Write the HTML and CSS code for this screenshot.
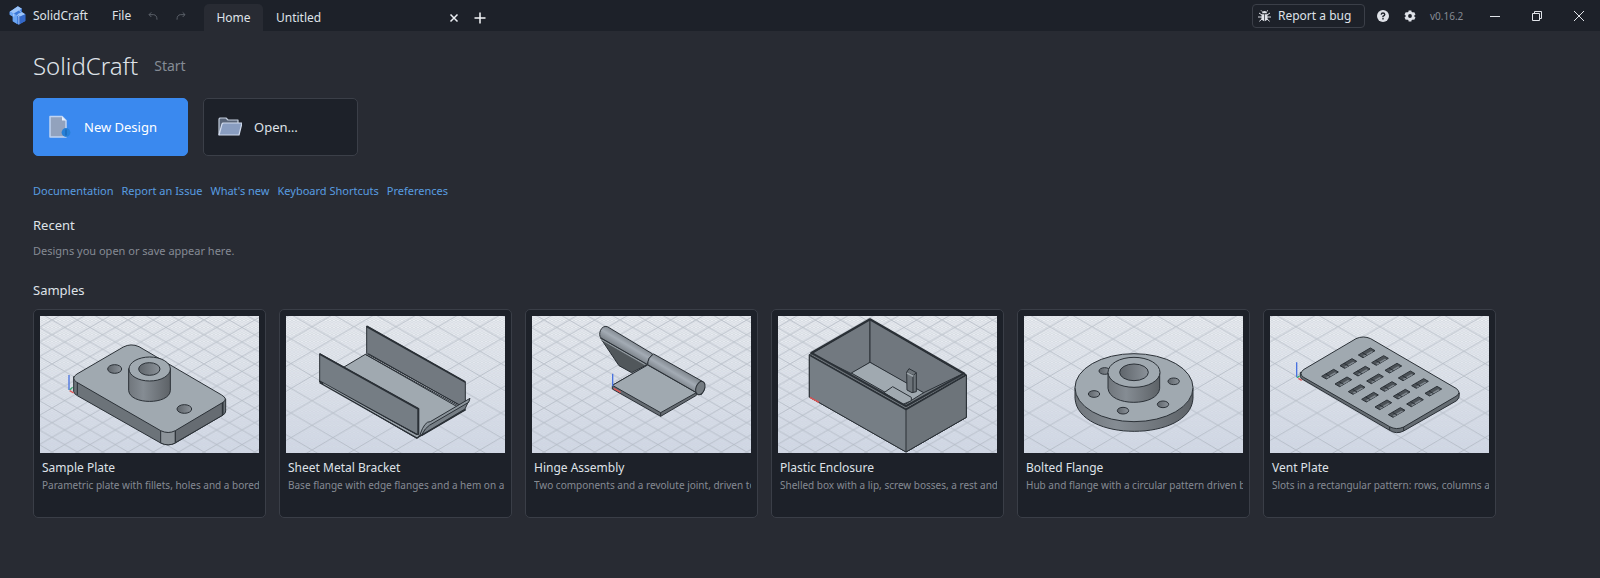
FILE: index.html
```html
<!DOCTYPE html>
<html lang="en">
<head>
<meta charset="utf-8">
<title>SolidCraft</title>
<link rel="stylesheet" href="styles.css">
</head>
<body>
<svg class="defs" aria-hidden="true">
  <defs>
    <linearGradient id="sky" x1="0" y1="0" x2="0" y2="1"><stop offset="0" stop-color="#eceff3"/><stop offset="1" stop-color="#d1d8e5"/></linearGradient>
    <linearGradient id="tube" x1="0" y1="0" x2="1" y2="0"><stop offset="0" stop-color="#70767c"/><stop offset=".35" stop-color="#858c93"/><stop offset="1" stop-color="#5d6267"/></linearGradient>
    <linearGradient id="bore" x1="0" y1="0" x2="1" y2="0"><stop offset="0" stop-color="#5f656b"/><stop offset="1" stop-color="#8b9299"/></linearGradient>
    <linearGradient id="barrel" gradientUnits="userSpaceOnUse" x1="430" y1="235" x2="408" y2="272"><stop offset="0" stop-color="#7c838a"/><stop offset=".5" stop-color="#a3abb4"/><stop offset="1" stop-color="#7b8289"/></linearGradient>
    <pattern id="minor" width="12" height="7" patternUnits="userSpaceOnUse"><path d="M0 0L12 7M12 0L0 7" stroke="#b4bcc8" stroke-width=".9"/></pattern>
    <pattern id="wide" x="12" y="451" width="126" height="74" patternUnits="userSpaceOnUse"><path d="M0 0L126 74M126 0L0 74" stroke="#a9b1bb" stroke-width="2"/></pattern>
    <pattern id="fine" x="20" y="443" width="76" height="44" patternUnits="userSpaceOnUse"><path d="M0 0L76 44M76 0L0 44" stroke="#a9b1bb" stroke-width="2"/></pattern>
    <linearGradient id="fade" x1="0" y1="0" x2="0" y2="1"><stop offset="0" stop-color="#fff"/><stop offset="1" stop-color="#fff" stop-opacity=".25"/></linearGradient>
    <mask id="depth" maskUnits="userSpaceOnUse" x="60" y="123" width="657" height="412"><rect x="60" y="123" width="657" height="412" fill="url(#fade)"/></mask>
    <g id="floor-wide"><rect x="60" y="123" width="657" height="412" fill="url(#sky)"/><rect x="60" y="123" width="657" height="412" fill="url(#minor)" mask="url(#depth)"/><rect x="60" y="123" width="657" height="412" fill="url(#wide)"/></g>
    <g id="floor-fine"><rect x="60" y="123" width="657" height="412" fill="url(#sky)"/><rect x="60" y="123" width="657" height="412" fill="url(#minor)" mask="url(#depth)"/><rect x="60" y="123" width="657" height="412" fill="url(#fine)"/></g>
    <g id="slot"><path d="M-25 6L11 -15L25 -7L-11 14Z" fill="#4c5257"/><path d="M-12 9L14 -6L20 -4L-8 12Z" fill="#7f878e" stroke="none"/><path d="M-13 -1L1 7" /></g>
  </defs>
</svg>

<header class="titlebar">
  <div class="brand">
    <svg class="logo" viewBox="0 0 50 56" aria-hidden="true"><path d="M2 17L26 1L38 8L38 19L48 24V44L28 55L11 45V31L2 26Z" fill="#3b78d8"/><path d="M2 17L26 1L38 8L14 22ZM24 24L38 18L48 24L32 32Z" fill="#9cc4f8"/><path d="M2 17L14 22L24 27V53L11 45V31L2 26Z" fill="#6ba5f2"/><path d="M28 33L48 24V44L28 55Z" fill="#3468c8"/><path d="M14 22V31M24 27L29 32V54M31 12L34 18" fill="none" stroke="#d3e5ff" stroke-width="2"/></svg>
    <span>SolidCraft</span>
  </div>
  <button class="menu" type="button">File</button>
  <button class="history" type="button" aria-label="Undo"><svg viewBox="0 0 30 30"><path d="M10 4L3 11L10 18M3 11H17Q27 12 27 26"/></svg></button>
  <button class="history" type="button" aria-label="Redo"><svg viewBox="0 0 30 30"><path d="M20 4L27 11L20 18M27 11H13Q3 12 3 26"/></svg></button>
  <nav class="tabs" aria-label="Documents">
    <button class="tab active" type="button">Home</button>
    <div class="tab document">
      <button class="plain" type="button">Untitled</button>
      <button class="close-tab" type="button" aria-label="Close tab"><svg viewBox="0 0 10 10"><path d="M1.500 1.500L8.500 8.500M8.500 1.500L1.500 8.500"/></svg></button>
    </div>
    <button class="add-tab" type="button" aria-label="New tab"><svg viewBox="0 0 12 12"><path d="M6 .5V11.500M.5 6H11.500"/></svg></button>
  </nav>
  <div class="actions">
    <button class="bug" type="button"><svg viewBox="0 0 39 36" aria-hidden="true"><path d="M12 10Q12 3 19.500 3T27 10Z"/><path d="M11 13H18.500V34Q11 33 10 25ZM20.500 13H28L29 25Q28 33 20.500 34Z"/><path d="M13 5L9 1M26 5L30 1M12 15L3 9M11 21H0M12 27L4 34M27 15L36 9M28 21H39M27 27L35 34" fill="none" stroke="currentColor" stroke-width="3"/></svg>Report a bug</button>
    <button class="round help" type="button" aria-label="Help"><svg viewBox="0 0 12 12"><circle cx="6" cy="6" r="6" fill="currentColor"/><path d="M4.200 4.700Q4.400 3 6 3T7.800 4.600Q7.800 5.500 6 6.300V7.200M6 8V9.400" fill="none" stroke="#1d2129" stroke-width="1.400"/></svg></button>
    <button class="round" type="button" aria-label="Settings"><svg viewBox="0 0 12 12"><circle cx="6" cy="6" r="3.200" fill="none" stroke="currentColor" stroke-width="2.600"/><path d="M6 .5V2.500M6 9.500V11.500M1.200 3.200L3 4.300M9 7.700L10.800 8.800M1.200 8.800L3 7.700M9 4.300L10.800 3.200" stroke="currentColor" stroke-width="2.800"/></svg></button>
    <span class="version">v0.16.2</span>
    <button class="window" type="button" aria-label="Minimize"><svg viewBox="0 0 12 12"><path d="M1 6.500H11"/></svg></button>
    <button class="window" type="button" aria-label="Restore"><svg viewBox="0 0 12 12"><path d="M1.500 3.500H8.500V10.500H1.500ZM3.500 3V1.500H10.500V8.500H9"/></svg></button>
    <button class="window" type="button" aria-label="Close"><svg viewBox="0 0 12 12"><path d="M1 1L11 11M11 1L1 11"/></svg></button>
  </div>
</header>

<main>
  <div class="heading"><h1>SolidCraft</h1><span>Start</span></div>
  <div class="starters">
    <button class="starter primary" type="button"><svg viewBox="0 0 24 24" aria-hidden="true"><path d="M2 1.500H14L18 5.500V22H2Z" fill="#92a2bd" stroke="#c0d4f2" stroke-width="1.500" stroke-linejoin="round"/><path d="M14 1.500V5.500H18" fill="#e8f1ff"/><circle cx="18" cy="17.500" r="4.400" fill="#2680d8"/><path d="M18 14.500V20.500" stroke="#175ca5"/></svg>New Design</button>
    <button class="starter" type="button"><svg viewBox="0 0 24 24" aria-hidden="true"><path d="M1 20V4L2 3H8L10 5H20V9H5L1 20" fill="#596579" stroke="#c3cddd" stroke-width="1.200" stroke-linejoin="round"/><path d="M4 9L5 8H24L21 20H1Z" fill="#899dc0" stroke="#d0daec" stroke-width="1.200" stroke-linejoin="round"/></svg>Open…</button>
  </div>
  <nav class="links" aria-label="Resources">
    <a href="#documentation">Documentation</a><a href="#issue">Report an Issue</a><a href="#news">What's new</a><a href="#shortcuts">Keyboard Shortcuts</a><a href="#preferences">Preferences</a>
  </nav>
  <section class="recent"><h2>Recent</h2><p>Designs you open or save appear here.</p></section>
  <section class="samples">
    <h2>Samples</h2>
    <div class="cards">
      <a class="card" href="#sample-plate">
        <svg viewBox="60 123 657 412" role="img" aria-label="Plate model"><use href="#floor-fine"/>
          <g class="model"><path d="M161 305V350Q162 356 172 362L422 504Q445 515 466 504L609 420Q617 416 617 408V372Z" fill="#6c7379"/><path d="M422 466V504Q445 515 466 504V466Z" fill="#8d949a"/><path d="M466 466V503L609 420V378Z" fill="#666c72"/><path d="M310 216Q333 204 357 215L605 360Q625 372 609 382L466 467Q445 478 422 467L169 321Q152 309 171 297Z" fill="#a0a9b0"/><path d="M172 323V360M607 384V420"/><ellipse cx="284" cy="282" rx="21" ry="13" fill="url(#bore)"/><ellipse cx="493" cy="402" rx="22" ry="13" fill="url(#bore)"/><path d="M326 281V347C330 390 448 390 451 347V281Z" fill="url(#tube)"/><ellipse cx="389" cy="282" rx="62" ry="36" fill="#a0a9b0"/><ellipse cx="388" cy="282" rx="32" ry="19" fill="url(#bore)"/></g>
          <g class="axes"><path class="z" d="M147 300V345"/><path class="y" d="M149 345L158 337"/><path class="x" d="M149 347L161 354"/></g></svg>
        <strong>Sample Plate</strong><span>Parametric plate with fillets, holes and a bored</span></a>
      <a class="card" href="#sheet-metal-bracket">
        <svg viewBox="60 123 657 412" role="img" aria-label="Bracket model"><use href="#floor-wide"/>
          <g class="model"><path d="M160 320L298 238L598 404L452 490Z" fill="#a0a9b0"/><path d="M302 153L598 321V390L578 388L302 236Z" fill="#727980"/><path d="M302 154L598 321" stroke-width="6"/><path d="M298 238L575 396M307 236L590 396"/><path d="M462 481Q477 450 492 443L610 374L597 402L460 484Z" fill="#767e85"/><path d="M462 479Q476 438 493 440L612 370L608 382L490 451Q478 458 466 481Z" fill="#8c959c"/><path d="M466 482L599 404" stroke-width="4"/><path d="M161 236L457 401V480L161 321Z" fill="#757d84"/><path d="M161 237L457 402V478" stroke-width="6"/><path d="M161 318L453 479M161 323L453 489L464 481" stroke-width="4"/><path d="M172 326L450 482" stroke="#99a1a8"/></g></svg>
        <strong>Sheet Metal Bracket</strong><span>Base flange with edge flanges and a hem on a 2 mm</span></a>
      <a class="card" href="#hinge-assembly">
        <svg viewBox="60 123 657 412" role="img" aria-label="Hinge model"><use href="#floor-fine"/>
          <g class="model"><path d="M266 190L321 272L359 293L407 268L405 260Z" fill="#51575b"/><path d="M268 193L400 269" stroke="#91999f" stroke-width="4"/><path d="M270 190L403 265" stroke-width="4"/><path d="M301 331L407 270L553 353V361L446 424L301 342Z" fill="#656b71"/><path d="M301 331L407 270L553 353L446 413Z" fill="#a0a9b0"/><path d="M446 413V424"/><path d="M286 155L422 237Q406 250 407 269L267 189C257 179 267 149 286 155Z" fill="url(#barrel)"/><path d="M425 237L571 319Q586 336 568 359L552 352L407 269Q407 248 425 237Z" fill="url(#barrel)"/><ellipse cx="565" cy="339" rx="13" ry="21" transform="rotate(20 565 339)" fill="#747b81"/></g>
          <g class="axes"><path class="z" d="M302 296V334"/><path class="x" d="M305 340L326 352"/></g></svg>
        <strong>Hinge Assembly</strong><span>Two components and a revolute joint, driven to</span></a>
      <a class="card" href="#plastic-enclosure">
        <svg viewBox="60 123 657 412" role="img" aria-label="Enclosure model"><use href="#floor-fine"/>
          <g class="model"><path d="M154 239L336 133L625 300V427L444 531L154 366Z" fill="#747b81"/><path d="M336 133V262L280 296L160 236Z" fill="#727980"/><path d="M336 133L615 296L495 354L336 262Z" fill="#70777e"/><path d="M336 262L497 353L443 387L280 294Z" fill="#a0a9b0"/><path d="M378 353L404 335L460 367V377L435 388Z" fill="#a0a9b0"/><path d="M446 292L453 281L475 293V350L462 353L447 345Z" fill="#6c7379"/><path d="M446 292L466 301L475 293M465 302V352"/><path d="M447 294L466 304" stroke="#9ca4aa" stroke-width="5"/><path d="M154 239L444 402L625 300V427L444 531L154 366Z" fill="#767e85"/><path d="M444 402L625 300V427L444 531Z" fill="#6d747a"/><path d="M160 234L336 133L619 296L444 394Z" fill="none" stroke-width="7"/><path d="M157 242L444 404L621 302" fill="none" stroke-width="4"/><path d="M163 239L444 398L618 299" fill="none" stroke="#858c92" stroke-width="1"/></g>
          <g class="axes"><path class="x" d="M156 367L183 382"/></g></svg>
        <strong>Plastic Enclosure</strong><span>Shelled box with a lip, screw bosses, a rest and</span></a>
      <a class="card" href="#bolted-flange">
        <svg viewBox="60 123 657 412" role="img" aria-label="Flange model"><use href="#floor-wide"/>
          <g class="model"><path d="M213 338V370C222 502 560 502 567 370V338Z" fill="url(#tube)"/><ellipse cx="390" cy="338" rx="177" ry="102" fill="#a0a9b0"/><g fill="url(#bore)"><ellipse cx="302" cy="288" rx="17" ry="10"/><ellipse cx="270" cy="357" rx="17" ry="10"/><ellipse cx="357" cy="407" rx="17" ry="10"/><ellipse cx="477" cy="388" rx="17" ry="10"/><ellipse cx="509" cy="319" rx="17" ry="10"/></g><path d="M312 292V340C317 396 462 396 467 340V292Z" fill="url(#tube)"/><ellipse cx="390" cy="292" rx="78" ry="45" fill="#a0a9b0"/><ellipse cx="390" cy="292" rx="43" ry="25" fill="url(#bore)"/></g></svg>
        <strong>Bolted Flange</strong><span>Hub and flange with a circular pattern driven by</span></a>
      <a class="card" href="#vent-plate">
        <svg viewBox="60 123 657 412" role="img" aria-label="Vent plate model"><use href="#floor-wide"/>
          <g class="model"><path d="M151 292V304Q151 311 161 315L419 466Q439 479 461 468L620 377Q629 371 628 354Z" fill="#656c72"/><path d="M318 191Q340 181 362 191L618 340Q636 353 618 364L461 456Q439 466 419 455L161 307Q144 296 162 283Z" fill="#a0a9b0"/><path d="M419 456V466M461 456V468"/>
            <use href="#slot" x="240" y="298"/><use href="#slot" x="280" y="321"/><use href="#slot" x="320" y="344"/><use href="#slot" x="360" y="367"/><use href="#slot" x="400" y="390"/><use href="#slot" x="440" y="413"/>
            <use href="#slot" x="295" y="266"/><use href="#slot" x="335" y="289"/><use href="#slot" x="375" y="312"/><use href="#slot" x="415" y="335"/><use href="#slot" x="455" y="358"/><use href="#slot" x="495" y="381"/>
            <use href="#slot" x="350" y="234"/><use href="#slot" x="390" y="257"/><use href="#slot" x="430" y="280"/><use href="#slot" x="470" y="303"/><use href="#slot" x="510" y="326"/><use href="#slot" x="550" y="349"/></g>
          <g class="axes"><path class="z" d="M140 262V307"/><path class="y" d="M141 308L149 302"/><path class="x" d="M145 310L155 316"/></g></svg>
        <strong>Vent Plate</strong><span>Slots in a rectangular pattern: rows, columns and</span></a>
    </div>
  </section>
</main>
</body>
</html>
```
FILE: styles.css
```css
* { box-sizing: border-box; }
body { margin: 0; min-height: 100vh; background: #282b33; color: #dfe2e8; font: 12px/18px "Noto Sans", "Open Sans", sans-serif; }
button { margin: 0; padding: 0; border: 0; background: none; color: inherit; font: inherit; }
svg { display: block; }
h1, h2, p { margin: 0; font-weight: 400; }
.defs { position: absolute; width: 0; height: 0; }

.titlebar { display: flex; align-items: center; height: 31px; padding-left: 9px; background: #1d2129; }
.brand { display: flex; align-items: center; gap: 7px; width: 103px; }
.logo { width: 17px; height: 19px; }
.menu { width: 20px; text-align: left; }
.history { display: flex; justify-content: center; width: 28px; color: #5a5f68; }
.menu + .history { margin-left: 7px; }
.history svg { width: 10px; height: 10px; fill: none; stroke: currentColor; stroke-width: 3; }
.tabs { display: flex; align-items: center; align-self: flex-end; height: 27px; margin-left: 9px; }
.tab { height: 27px; }
.active { width: 59px; border-radius: 5px 5px 0 0; background: #282b33; }
.document { display: flex; align-items: center; justify-content: space-between; width: 196px; padding-left: 13px; }
.close-tab svg { width: 10px; height: 10px; stroke: #eceff4; stroke-width: 1.5; }
.add-tab { margin-left: 15px; }
.add-tab svg { width: 12px; height: 12px; stroke: #f3f5f8; stroke-width: 1.5; }
.actions { display: flex; align-items: center; margin-left: auto; padding-right: 15px; }
.bug { display: flex; align-items: center; gap: 7px; width: 113px; height: 24px; padding-left: 5px; border: 1px solid #3b3f48; border-radius: 4px; }
.bug svg { width: 13px; height: 12px; fill: currentColor; }
.round { margin-left: 15px; }
.help { margin-left: 12px; }
.round svg { width: 12px; height: 12px; }
.version { width: 47px; margin-left: 14px; color: #868b94; font-size: 10px; }
.window { margin-left: 12px; }
.window + .window { margin-left: 30px; }
.window svg { width: 12px; height: 12px; fill: none; stroke: #e1e4e9; }

main { padding: 19px 33px 40px; }
.heading { display: flex; align-items: center; gap: 16px; height: 32px; margin-bottom: 16px; }
h1 { font-size: 24px; line-height: 32px; font-weight: 300; }
.heading span { color: #858b95; font-size: 14px; }
.starters { display: flex; gap: 15px; }
.starter { display: flex; align-items: center; gap: 12px; width: 155px; height: 58px; padding-left: 14px; border: 1px solid #3b3f48; border-radius: 5px; background: #1d2129; font-size: 13px; }
.starter svg { width: 24px; height: 24px; }
.primary { border-color: #3a89ef; background: #3a89ef; color: #fff; }
.links { display: flex; flex-wrap: wrap; gap: 8px; margin-top: 26px; font-size: 11px; }
.links a { color: #589de0; text-decoration: none; }
h2 { font-size: 13px; line-height: 20px; }
.recent { margin-top: 15px; }
.recent p { margin-top: 7px; color: #858a93; font-size: 11px; }
.samples { margin-top: 20px; }
.cards { display: flex; flex-wrap: wrap; gap: 13px; margin-top: 9px; }
.card { display: flex; flex-direction: column; width: 233px; min-height: 209px; padding: 6px; border: 1px solid #3a3e47; border-radius: 5px; background: #1d2129; color: inherit; text-decoration: none; }
.card > svg { width: 100%; height: auto; margin-bottom: 6px; }
.card strong { padding-left: 2px; font-size: 12px; line-height: 18px; font-weight: 400; }
.card span { margin-left: 2px; overflow: hidden; color: #858a93; font-size: 10px; line-height: 16px; white-space: nowrap; }
.model { fill: none; stroke: #2a3036; stroke-width: 3; stroke-linejoin: round; }
.axes { fill: none; stroke-width: 4; }
.x { stroke: #df5454; }
.y { stroke: #39a66d; }
.z { stroke: #4972df; }
```
